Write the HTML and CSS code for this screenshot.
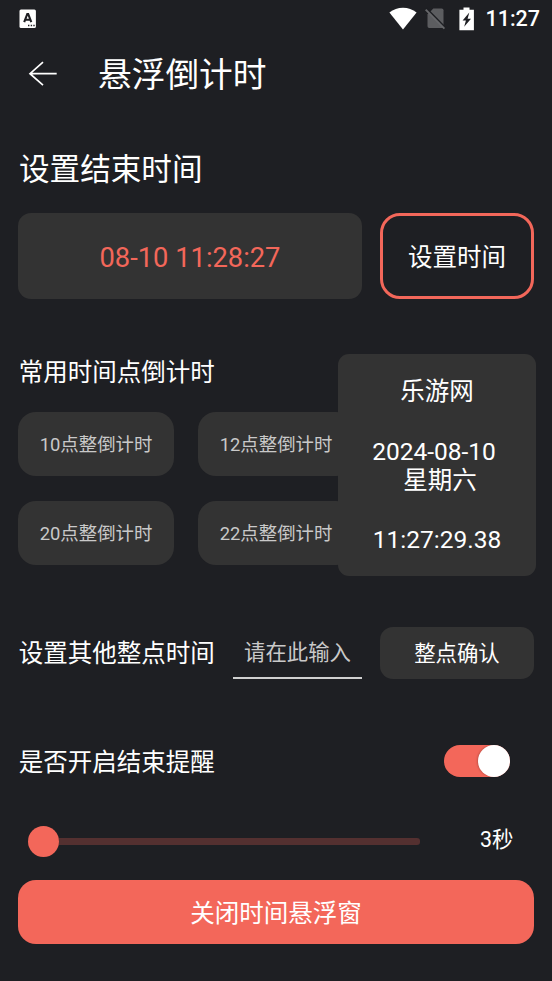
FILE: index.html
```html
<!DOCTYPE html>
<html lang="zh-CN">
<head>
<meta charset="utf-8">
<title>悬浮倒计时</title>
<link rel="stylesheet" href="styles.css">
</head>
<body>
<div class="screen">
  <div class="status-bar">
    <svg class="status-app" width="18" height="20" viewBox="0 0 18 20"><rect x=".5" y=".5" width="16.4" height="18.6" rx="1.5" fill="#fff"/><path d="M5.2 13.2 8.3 5h.9l3.1 8.2M6.3 10.7h4.9" fill="none" stroke="#1e1f23" stroke-width="2.1"/><path d="M9 16.5h1.4m1.3 0h1.4m1.2 0h1.4" stroke="#1e1f23" stroke-width="1.5"/></svg>
    <div class="status-right">
      <svg width="28" height="23" viewBox="0 0 28 23"><path d="M.4 5.5C8-.8 20-.8 27.6 5.5L14 22.4Z" fill="#fff"/></svg>
      <svg class="sim" width="21" height="23" viewBox="0 0 21 23"><path d="M8.3 1.5h8.4q1.8 0 1.8 1.8v16.8q0 1-.9 1H4.2Q2.5 21 2.5 19.3V7.4Z" fill="#5c5d60"/><path d="M1.4 1.4 20.5 20.8" stroke="#1e1f23" stroke-width="2"/><path d="M.7 2.6 19.4 21.6" stroke="#66676a" stroke-width="1.9"/></svg>
      <svg class="battery" width="16" height="24" viewBox="0 0 16 24"><path d="M4.5.5h6v2.3h4.4v20.5H.4V2.8h4.1Z" fill="#fff"/><path d="M10.3 5.6 3.6 13.6h3.3l-1.7 6.2L12 11.8H8.6Z" fill="#1e1f23"/></svg>
      <span class="clock">11:27</span>
    </div>
  </div>

  <header class="header">
    <svg width="30" height="26" viewBox="0 0 30 26" fill="none" stroke="#fff" stroke-width="1.7"><path d="M28.7 12.7H2M15 1.2 2 12.7l13 11.5"/></svg>
    <h1>悬浮倒计时</h1>
  </header>

  <main>
    <h2 class="end-title">设置结束时间</h2>
    <div class="end-row">
      <div class="end-time">08-10 11:28:27</div>
      <button class="set-time">设置时间</button>
    </div>

    <section class="common">
      <h3>常用时间点倒计时</h3>
      <div class="chips">
        <button>10点整倒计时</button>
        <button>12点整倒计时</button>
        <button>20点整倒计时</button>
        <button>22点整倒计时</button>
      </div>
      <div class="floating">
        <p>乐游网</p>
        <p class="date">2024-08-10</p>
        <p class="weekday">星期六</p>
        <p class="now">11:27:29.38</p>
      </div>
    </section>

    <div class="other-row">
      <h3>设置其他整点时间</h3>
      <div class="hour-input">请在此输入</div>
      <button class="confirm">整点确认</button>
    </div>

    <div class="remind-row">
      <h3>是否开启结束提醒</h3>
      <div class="toggle"><span></span></div>
    </div>

    <div class="slider-row">
      <div class="slider"><span class="thumb"></span><span class="track"></span></div>
      <span class="seconds">3秒</span>
    </div>

    <button class="close">关闭时间悬浮窗</button>
  </main>
</div>
</body>
</html>
```
FILE: styles.css
```css
* { box-sizing: border-box; }

body {
  margin: 0;
  background: #1e1f23;
  color: #fff;
  font-family: Roboto, "Noto Sans CJK SC", sans-serif;
}

h1, h2, h3, p { margin: 0; font-weight: 400; white-space: nowrap; }

button {
  margin: 0;
  padding: 0 0 2px;
  border: 0;
  color: inherit;
  font-family: inherit;
  white-space: nowrap;
}

svg { display: block; }

.screen { width: 552px; height: 981px; overflow: hidden; }

.status-bar {
  display: flex;
  justify-content: space-between;
  align-items: center;
  height: 37px;
  padding: 0 12px 0 19px;
}

.status-right { display: flex; align-items: center; }
.sim { margin-left: 8px; }
.battery { margin-left: 13px; }
.clock { margin-left: 10px; font-size: 21.5px; line-height: 37px; font-weight: 500; }

.header {
  display: flex;
  align-items: center;
  height: 73px;
  padding-left: 28px;
}

h1 { margin-left: 40px; padding-top: 4px; font-size: 33.7px; line-height: 40px; }

main { padding: 0 18px; }

.end-title { height: 103px; padding-left: 1px; font-size: 30.6px; line-height: 120px; }
h3 { padding-top: 3px; padding-left: .7px; font-size: 24.5px; line-height: 36px; }

.end-row { display: flex; gap: 18px; height: 86px; }

.end-time {
  width: 344px;
  border-radius: 13px;
  background: #333;
  color: #f3675a;
  font-size: 27.3px;
  line-height: 90px;
  text-align: center;
}

.set-time {
  width: 154px;
  border: 3px solid #f3675a;
  border-radius: 20px;
  background: transparent;
  font-size: 24.5px;
}

.common { position: relative; padding-top: 53px; }

.chips {
  display: grid;
  grid-template-columns: 156px 156px;
  gap: 25px 24px;
  margin-top: 21px;
}

.chips button {
  height: 64px;
  border-radius: 18px;
  background: #333;
  color: #c9c9c9;
  font-size: 18.4px;
}

.floating {
  position: absolute;
  left: 320px;
  top: 54.5px;
  width: 198px;
  height: 222.5px;
  padding: 23.5px 0 0;
  border-radius: 11px;
  background: #333;
  font-size: 24.5px;
  line-height: 29px;
  text-align: center;
}

.date { margin-top: 31px; padding-right: 6px; }
.weekday { padding-left: 6px; }
.now { margin-top: 30px; }

.other-row { display: flex; align-items: center; height: 52px; margin-top: 61.5px; }

.hour-input {
  width: 129px;
  height: 52px;
  margin-left: 18.3px;
  border-bottom: 2px solid #d0d0d0;
  color: #c9c9c9;
  font-size: 21.4px;
  line-height: 52px;
  text-align: center;
  white-space: nowrap;
}

.confirm {
  width: 154px;
  height: 52px;
  margin-left: 18px;
  padding-bottom: 3px;
  border-radius: 13px;
  background: #333;
  font-size: 21.4px;
}

.remind-row {
  display: flex;
  justify-content: space-between;
  align-items: center;
  height: 34px;
  margin-top: 65.5px;
  padding-right: 24px;
}

.toggle {
  display: flex;
  justify-content: flex-end;
  width: 66px;
  height: 32.5px;
  border-radius: 17px;
  background: #f3675a;
}

.toggle span {
  width: 32.5px;
  height: 32.5px;
  border-radius: 50%;
  background: #fff;
  box-shadow: -1px 0 2px rgba(0, 0, 0, .2);
}

.slider-row {
  display: flex;
  justify-content: space-between;
  align-items: center;
  height: 102px;
  padding: 24px 20.5px 0 9.5px;
}

.slider { display: flex; align-items: center; width: 392.5px; }
.thumb { width: 31px; height: 31px; border-radius: 50%; background: #f3675a; }
.track { flex: 1; height: 7px; border-radius: 0 3px 3px 0; background: #543030; }
.seconds { margin-top: -3px; font-size: 21.4px; line-height: 30px; }

.close {
  display: block;
  width: 516px;
  height: 64px;
  border-radius: 18px;
  background: #f3675a;
  font-size: 24.5px;
}
```
